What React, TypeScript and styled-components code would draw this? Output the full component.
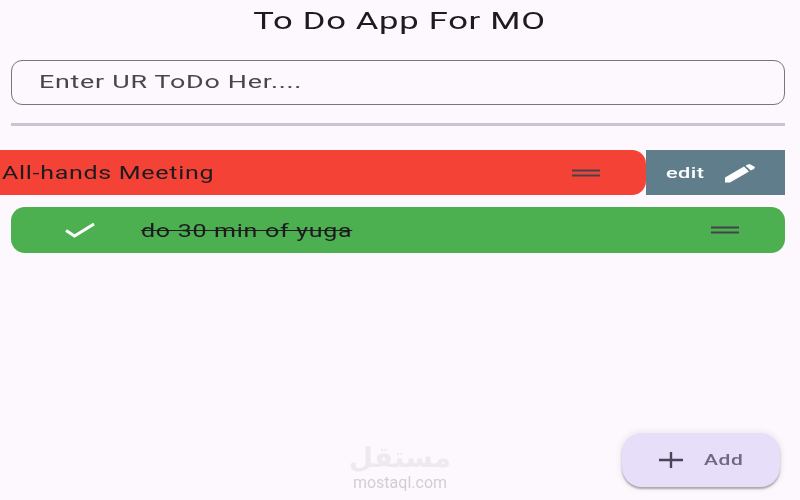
import React from 'react';
import styled, { createGlobalStyle } from 'styled-components';

const GlobalStyle = createGlobalStyle`
  html, body { margin: 0; padding: 0; background: #fdf8fe; }
  body { font-family: Roboto, "Liberation Sans", sans-serif; overflow: hidden; }
`;

const Screen = styled.div`
  position: relative;
  width: 800px;
  height: 500px;
  overflow: hidden;
  background: #fdf8fe;
  display: flex;
  flex-direction: column;
  filter: blur(0.35px);
`;

// the shot is a narrow phone screen stretched sideways, so text gets widened too
const Wide = styled.span<{ $x: number; $origin?: string; $struck?: boolean }>`
  display: inline-block;
  transform: scaleX(${p => p.$x});
  transform-origin: ${p => p.$origin ?? 'left'} center;
  text-decoration: ${p => (p.$struck ? 'line-through' : 'none')};
`;

const Title = styled.h1`
  margin: 0;
  padding-top: 5px;
  height: 37px;
  line-height: 32px;
  text-align: center;
  font-size: 24px;
  font-weight: 400;
  letter-spacing: 0.5px;
  color: #1d1b20;
`;

const InputBox = styled.div`
  margin: 18px 15px 0 11px;
  height: 43px;
  border: 1px solid #79747e;
  border-radius: 11px;
  display: flex;
  align-items: center;
  padding: 0 27px 2px;
  box-sizing: content-box;
  height: 41px;
  font-size: 18px;
  letter-spacing: 0.5px;
  color: #49454f;
`;

const Divider = styled.div`
  margin: 18px 15px 0 11px;
  height: 3px;
  background: #cac4d0;
`;

const List = styled.div`
  margin-top: 24px;
  display: flex;
  flex-direction: column;
  gap: 12px;
`;

const SwipeRow = styled.div`
  display: flex;
  height: 45px;
  margin-right: 15px;
`;

const RedTask = styled.div`
  flex: 1;
  display: flex;
  align-items: center;
  justify-content: space-between;
  padding: 0 46px 0 2px;
  background: #f44336;
  border-radius: 0 14px 14px 0;
`;

const EditAction = styled.div`
  width: 139px;
  background: #607d8b;
  color: #fff;
  display: flex;
  align-items: center;
  padding-left: 20px;
  gap: 31px;
  box-sizing: border-box;
  font-size: 15px;
  font-weight: 500;
  letter-spacing: 0.3px;
`;

const GreenTask = styled.div`
  margin: 0 15px 0 11px;
  height: 46px;
  display: flex;
  align-items: center;
  background: #4caf50;
  border-radius: 14px;
  padding: 0 46px 0 54px;
`;

const TaskText = styled.span<{ $done?: boolean }>`
  font-size: 18px;
  letter-spacing: 0.5px;
  color: #1d1b20;
  flex: ${p => (p.$done ? 1 : 'none')};
  margin-left: ${p => (p.$done ? '46px' : 0)};
`;

const Fab = styled.div`
  position: absolute;
  left: 622px;
  top: 433px;
  width: 158px;
  height: 54px;
  border-radius: 20px;
  background: #e7def9;
  display: flex;
  align-items: center;
  padding-left: 37px;
  gap: 21px;
  box-sizing: border-box;
  color: #6f6880;
  font-size: 15px;
  font-weight: 500;
  letter-spacing: 0.4px;
  box-shadow: 0 2px 2px rgba(0, 0, 0, 0.3), 0 0 5px 3px rgba(0, 0, 0, 0.05);
`;

const Watermark = styled.div`
  position: absolute;
  left: 340px;
  top: 441px;
  width: 120px;
  text-align: center;
  color: #6b6b75;
  pointer-events: none;
`;

const WatermarkArabic = styled.div`
  font-family: "DejaVu Sans", sans-serif;
  font-size: 28px;
  font-weight: 700;
  line-height: 34px;
  opacity: 0.1;
`;

const WatermarkLatin = styled.div`
  font-size: 16px;
  line-height: 14px;
  padding-top: 1px;
  opacity: 0.3;
`;

const Handle = () => (
  <svg width="28" height="8" viewBox="0 0 28 8">
    <path d="M0 1.5h28M0 6.5h28" stroke="#44424a" strokeWidth="2" fill="none" />
  </svg>
);

const Check = () => (
  <svg width="30" height="18" viewBox="0 0 30 18" style={{ flexShrink: 0 }}>
    <path d="M1 9.5l8.5 5.5L29 3" stroke="#fff" strokeWidth="3" fill="none" />
  </svg>
);

const Pencil = () => (
  <svg width="32" height="20" viewBox="0 0 32 20">
    <path d="M1 19.5V14.5L20 3.5L25 8.5L6 19.5ZM22 2.2L25.5 1L31 4L30 6L26.8 7.6L21.8 3Z" fill="#fff" />
  </svg>
);

const Plus = () => (
  <svg width="24" height="16" viewBox="0 0 24 16" style={{ flexShrink: 0 }}>
    <path d="M0 8h24M12 0v16" stroke="#4a4458" strokeWidth="2.4" fill="none" />
  </svg>
);

const App: React.FC = () => (
  <Screen>
    <GlobalStyle />
    <Title>
      <Wide $x={1.44} $origin="center">To Do App For MO</Wide>
    </Title>
    <InputBox>
      <Wide $x={1.49}>Enter UR ToDo Her....</Wide>
    </InputBox>
    <Divider />
    <List>
      <SwipeRow>
        <RedTask>
          <TaskText>
            <Wide $x={1.39}>All-hands Meeting</Wide>
          </TaskText>
          <Handle />
        </RedTask>
        <EditAction>
          <Wide $x={1.45}>edit</Wide>
          <Pencil />
        </EditAction>
      </SwipeRow>
      <GreenTask>
        <Check />
        <TaskText $done>
          <Wide $x={1.39} $struck>do 30 min of yuga</Wide>
        </TaskText>
        <Handle />
      </GreenTask>
    </List>
    <Watermark>
      <WatermarkArabic>مستقل</WatermarkArabic>
      <WatermarkLatin>mostaql.com</WatermarkLatin>
    </Watermark>
    <Fab>
      <Plus />
      <Wide $x={1.4}>Add</Wide>
    </Fab>
  </Screen>
);

export default App;
